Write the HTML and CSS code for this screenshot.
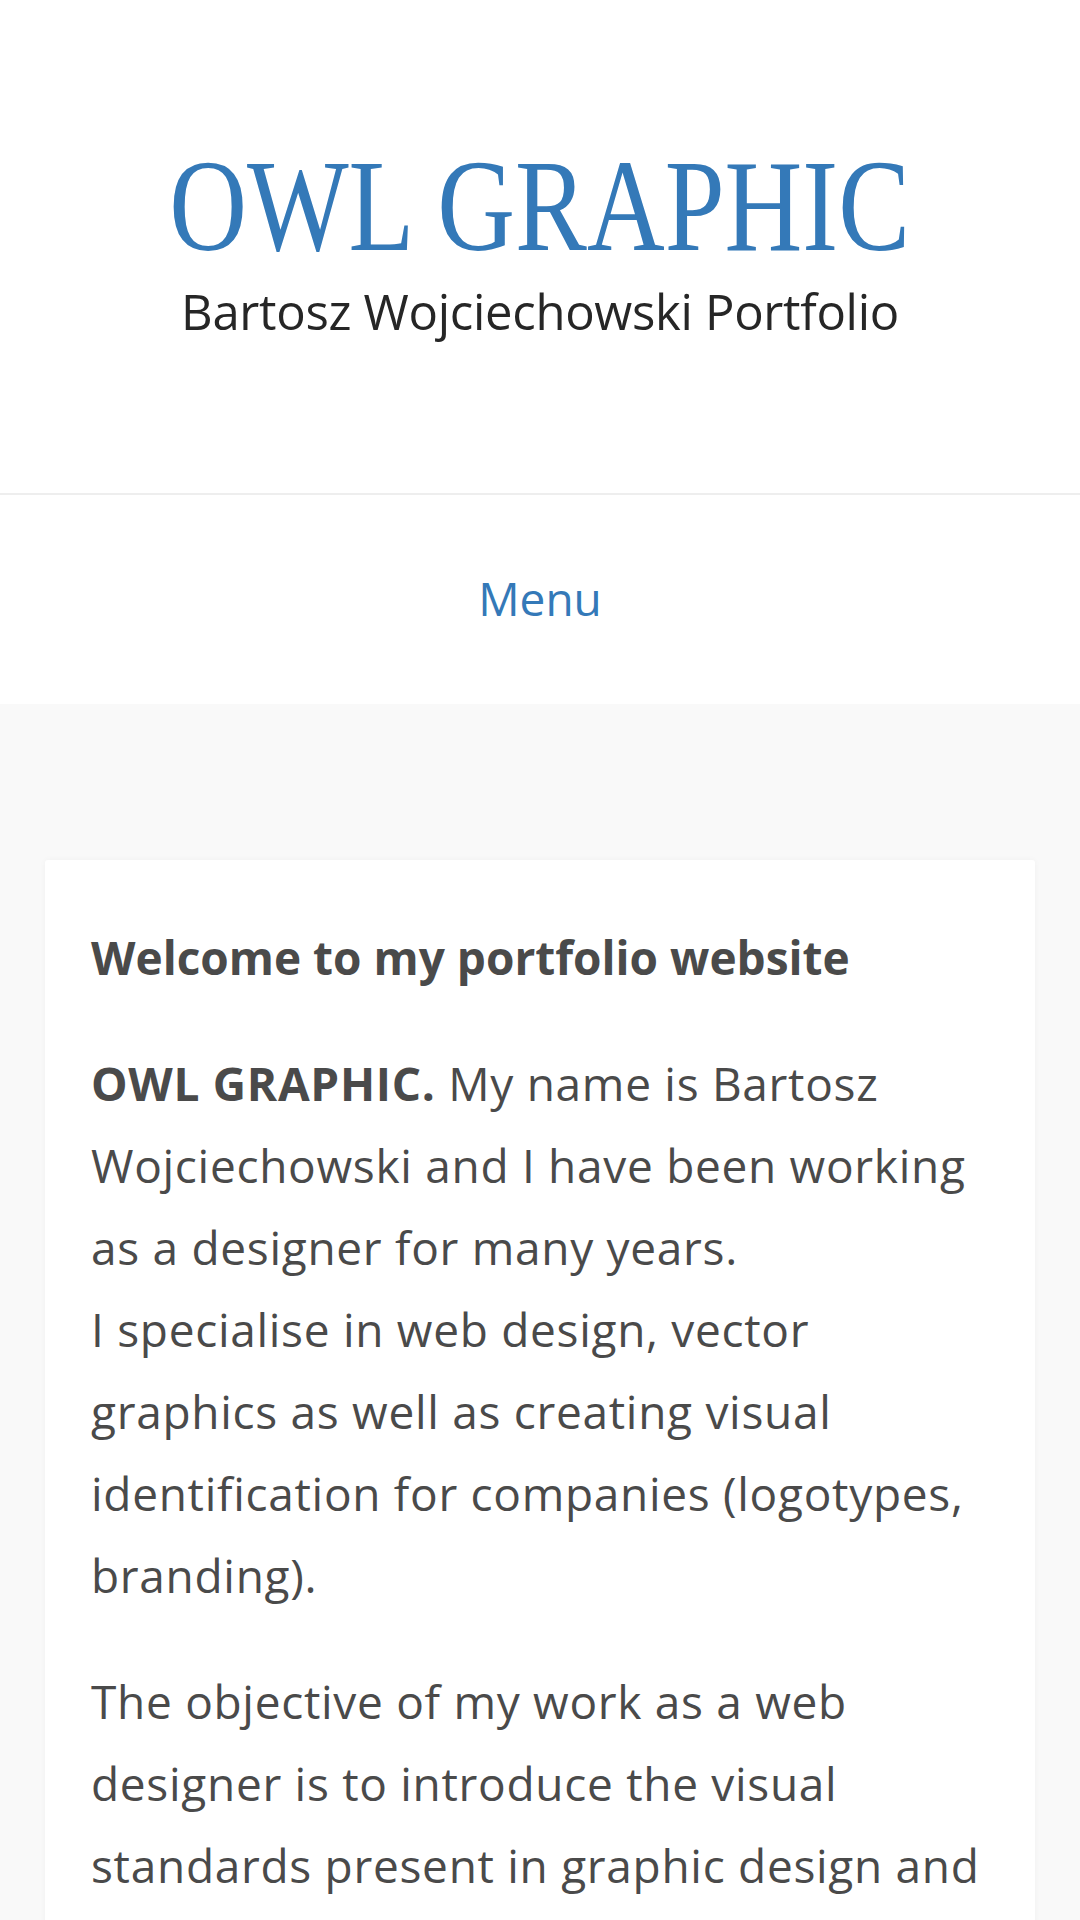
FILE: index.html
```html
<!DOCTYPE html>
<html lang="en">
<head>
<meta charset="utf-8">
<title>OWL GRAPHIC</title>
<link rel="stylesheet" href="styles.css">
</head>
<body>
<header class="site-header">
  <h1 class="site-title"><span class="site-title-text">OWL GRAPHIC</span></h1>
  <p class="site-description">Bartosz Wojciechowski Portfolio</p>
</header>
<nav class="site-nav">
  <span class="menu-toggle">Menu</span>
</nav>
<main class="site-main">
  <article class="card">
    <h2 class="card-title">Welcome to my portfolio website</h2>
    <p class="card-text"><strong>OWL GRAPHIC.</strong> My name is Bartosz Wojciechowski and I have been working as a designer for many years.<br>I specialise in web design, vector graphics as well as creating visual identification for companies (logotypes, branding).</p>
    <p class="card-text">The objective of my work as a web designer is to introduce the visual standards present in graphic design and</p>
  </article>
</main>
</body>
</html>
```
FILE: styles.css
```css
html, body {
  margin: 0;
  padding: 0;
  background: #ffffff;
}
body {
  font-family: "Open Sans", "Lato", sans-serif;
  color: #4a4a4a;
  overflow: hidden;
}
.site-header {
  text-align: center;
  padding: 140px 20px 152px;
}
.site-title {
  margin: 0;
  font-family: "Liberation Serif", serif;
  font-weight: 400;
  font-size: 131px;
  line-height: 1;
  color: #3479b8;
  white-space: nowrap;
}
.site-title-text {
  display: inline-block;
  transform: scaleX(0.822);
}
.site-description {
  margin: 11px 0 0;
  font-size: 49px;
  line-height: 1.2;
  letter-spacing: -0.3px;
  color: #262626;
}
.site-nav {
  border-top: 2px solid #eeeeee;
  text-align: center;
  padding: 76px 0 78px;
}
.menu-toggle {
  display: inline-block;
  font-size: 46px;
  line-height: 1.2;
  color: #3479b8;
}
.site-main {
  background: #f9f9f9;
  padding: 156px 45px 0;
  min-height: 1300px;
}
.card {
  background: #ffffff;
  border-radius: 3px;
  box-shadow: 0 0 6px rgba(0, 0, 0, 0.04);
  padding: 70px 46px 40px;
}
.card-title {
  margin: 0 0 57px;
  font-size: 46px;
  line-height: 1.2;
  font-weight: 700;
  color: #4a4a4a;
}
.card-text {
  margin: 0 0 44px;
  font-size: 46px;
  line-height: 82px;
  letter-spacing: 0.7px;
  color: #4a4a4a;
}
.card-text strong {
  font-weight: 700;
}
```
